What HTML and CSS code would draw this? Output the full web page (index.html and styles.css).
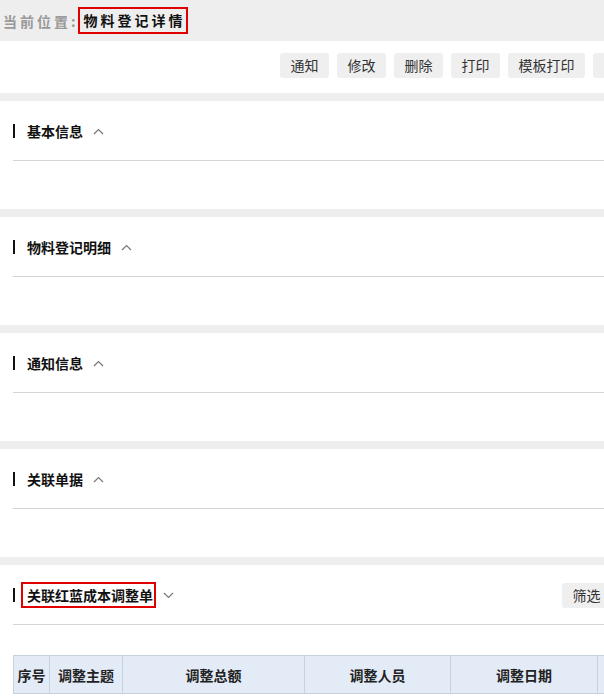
FILE: index.html
```html
<!DOCTYPE html>
<html lang="zh">
<head>
<meta charset="utf-8">
<title>物料登记详情</title>
<link rel="stylesheet" href="styles.css">
</head>
<body>
<div class="page">
  <div class="crumb">
    <span class="crumb-label">当前位置:</span><span class="crumb-current">物料登记详情</span>
  </div>
  <div class="toolbar">
    <button class="btn">通知</button>
    <button class="btn">修改</button>
    <button class="btn">删除</button>
    <button class="btn">打印</button>
    <button class="btn">模板打印</button>
    <button class="btn btn-blank" aria-label="返回"></button>
  </div>

  <section class="panel">
    <div class="panel-head">
      <span class="bar"></span><span class="title">基本信息</span>
      <svg class="chev" width="11" height="7" viewBox="0 0 11 7"><polyline points="1,6 5.5,1.5 10,6" fill="none" stroke="#777" stroke-width="1.2"/></svg>
    </div>
    <div class="rule"></div>
  </section>

  <section class="panel">
    <div class="panel-head">
      <span class="bar"></span><span class="title">物料登记明细</span>
      <svg class="chev" width="11" height="7" viewBox="0 0 11 7"><polyline points="1,6 5.5,1.5 10,6" fill="none" stroke="#777" stroke-width="1.2"/></svg>
    </div>
    <div class="rule"></div>
  </section>

  <section class="panel">
    <div class="panel-head">
      <span class="bar"></span><span class="title">通知信息</span>
      <svg class="chev" width="11" height="7" viewBox="0 0 11 7"><polyline points="1,6 5.5,1.5 10,6" fill="none" stroke="#777" stroke-width="1.2"/></svg>
    </div>
    <div class="rule"></div>
  </section>

  <section class="panel">
    <div class="panel-head">
      <span class="bar"></span><span class="title">关联单据</span>
      <svg class="chev" width="11" height="7" viewBox="0 0 11 7"><polyline points="1,6 5.5,1.5 10,6" fill="none" stroke="#777" stroke-width="1.2"/></svg>
    </div>
    <div class="rule"></div>
  </section>

  <section class="panel panel-last">
    <div class="panel-head">
      <span class="bar"></span><span class="title title-boxed">关联红蓝成本调整单</span>
      <svg class="chev chev-down" width="11" height="7" viewBox="0 0 11 7"><polyline points="1,1 5.5,5.5 10,1" fill="none" stroke="#777" stroke-width="1.2"/></svg>
      <span class="spacer"></span>
      <button class="btn btn-filter">筛选</button>
    </div>
    <div class="rule"></div>
    <table class="grid">
      <thead>
        <tr>
          <th class="c1">序号</th>
          <th class="c2">调整主题</th>
          <th class="c3">调整总额</th>
          <th class="c4">调整人员</th>
          <th class="c5">调整日期</th>
          <th class="c6"></th>
        </tr>
      </thead>
    </table>
  </section>
</div>
</body>
</html>
```

FILE: styles.css
```css
html, body {
  margin: 0;
  padding: 0;
  overflow: hidden;
  background: #eeeeee;
}
body {
  font-family: "Noto Sans CJK SC", "Noto Sans", sans-serif;
  font-size: 14px;
  color: #333;
}
.page {
  width: 680px;
  display: flex;
  flex-direction: column;
  gap: 8px;
}
.crumb {
  height: 41px;
  display: flex;
  align-items: center;
  padding-left: 3px;
  margin-bottom: -8px;
  font-weight: bold;
  letter-spacing: 3px;
  line-height: 20px;
}
.crumb-label {
  color: #9a9a9a;
  margin-right: -1px;
}
.crumb-current {
  color: #111;
  border: 2px solid #e00000;
  padding: 1px 0 2px 4px;
}
.toolbar {
  height: 52px;
  background: #fff;
  display: flex;
  justify-content: flex-end;
  align-items: flex-start;
  gap: 8px;
  padding: 12px 38px 0 0;
  box-sizing: border-box;
}
.btn {
  font-family: inherit;
  font-size: 14px;
  color: #333;
  background: #efefef;
  border: none;
  border-radius: 3px;
  height: 25px;
  padding: 0 10.5px;
  line-height: 25px;
}
.btn-blank {
  width: 49px;
}
.panel {
  background: #fff;
  height: 108px;
  padding-left: 13px;
  box-sizing: border-box;
}
.panel-last {
  height: 140px;
}
.panel-head {
  height: 59px;
  display: flex;
  align-items: center;
  padding-top: 1px;
  box-sizing: border-box;
}
.bar {
  width: 2px;
  height: 14px;
  background: #111;
  margin-right: 12px;
}
.title {
  font-weight: bold;
  color: #111;
  line-height: 20px;
}
.title-boxed {
  border: 2px solid #e00000;
  padding: 1px 1px 1px 4px;
  margin-left: -6px;
}
.chev {
  margin-left: 10px;
}
.chev-down {
  margin-left: 7px;
}
.spacer {
  flex: 1;
}
.btn-filter {
  margin-right: 69px;
}
.rule {
  height: 1px;
  background: #d6d6d6;
}
.grid {
  margin-top: 30px;
  border-collapse: collapse;
  table-layout: fixed;
  width: 680px;
}
.grid th {
  height: 38px;
  box-sizing: border-box;
  background: #e3ebf6;
  border: 1px solid #c9d1dc;
  font-weight: bold;
  color: #222;
  padding: 0;
  text-align: center;
}
.c1 { width: 36px; }
.c2 { width: 73px; }
.c3 { width: 182px; }
.c4 { width: 146px; }
.c5 { width: 147px; }
.c6 { width: 96px; }
```
